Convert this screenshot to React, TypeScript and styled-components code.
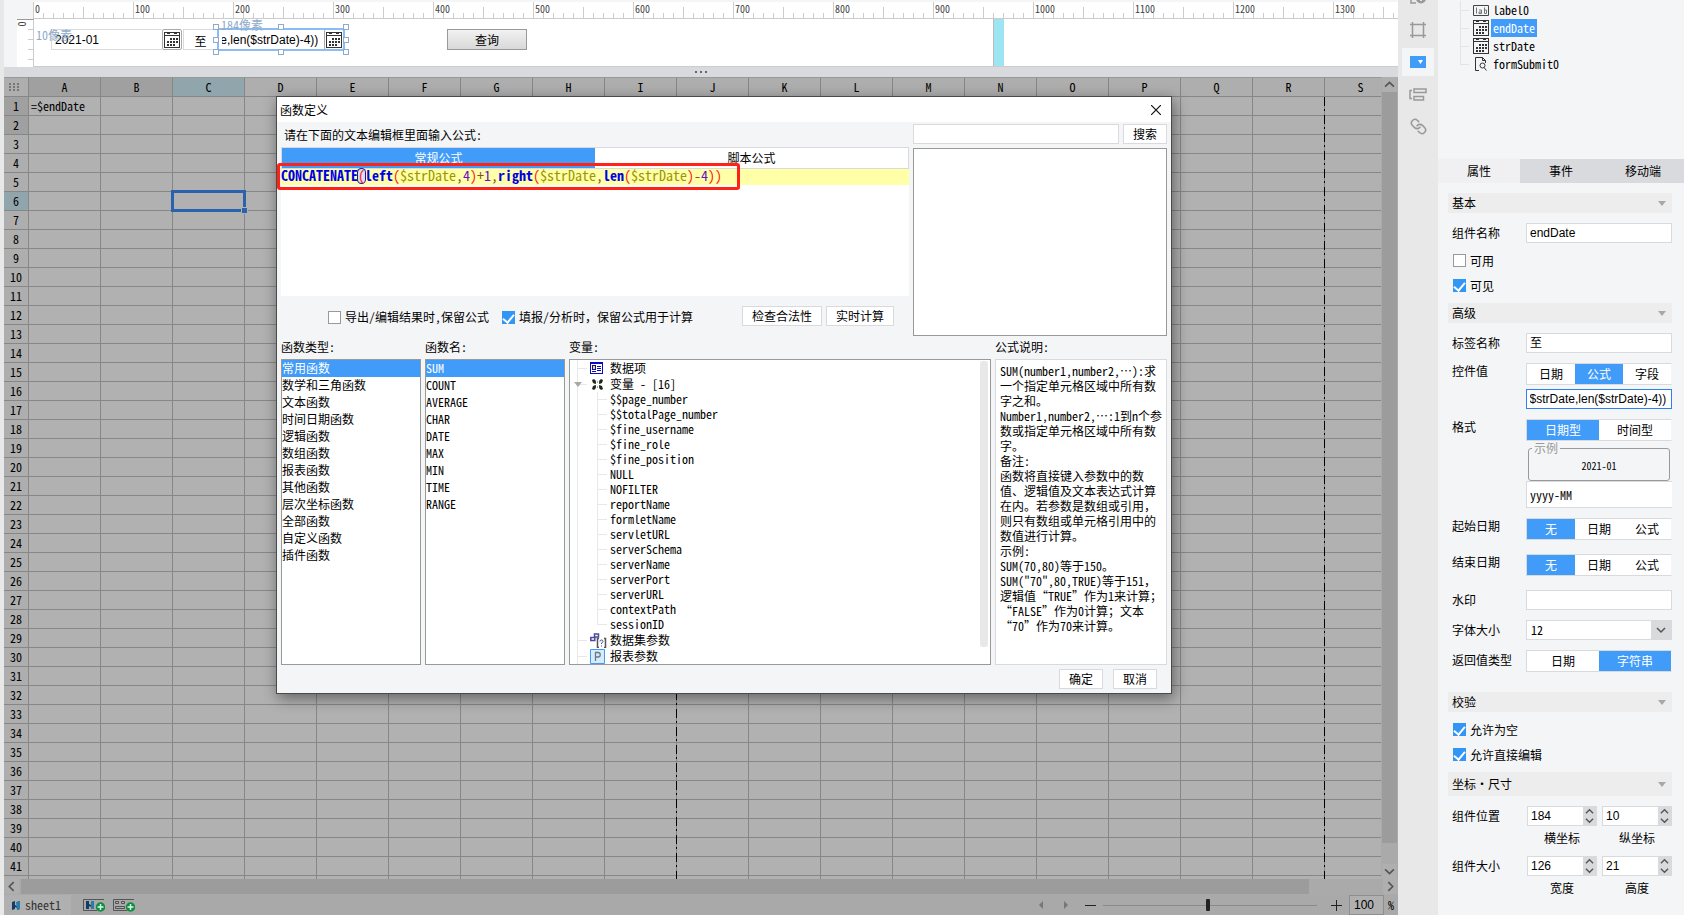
import React from "react";
import styled, { createGlobalStyle, css } from "styled-components";

const sans = `"Liberation Sans", Arial, "Noto Sans CJK SC", sans-serif`;
const song = `"Noto Sans Mono CJK SC", "Noto Sans CJK SC", monospace`;
const blue = "#419bf9";
const panelBg = "#f4f5f7";
const line = "#d9dadd";

const GlobalStyle = createGlobalStyle`
  * { box-sizing: border-box; }
  body { margin: 0; background: #e8e8e8; color: #000; font: 12px/16px ${song}; overflow: hidden; }
  button, input, select { font: inherit; color: inherit; border-radius: 0; margin: 0; }
  button { cursor: pointer; padding: 0; }
  ul { list-style: none; margin: 0; padding: 0; }
  svg { display: block; flex: none; }
`;

/* ---------- page frame ---------- */

const Page = styled.div`
  position: relative;
  display: flex;
  height: 100vh;
  padding-left: 4px;
`;

const Workspace = styled.main`
  flex: 1;
  min-width: 0;
  display: flex;
  flex-direction: column;
`;

/* ---------- form designer strip ---------- */

const Designer = styled.section`
  display: grid;
  grid-template-columns: 30px 1fr;
  grid-template-rows: 19px 48px;
  height: 67px;
  background: ${panelBg};
`;

const HRuler = styled.div`
  grid-column: 2;
  display: flex;
  min-width: 0;
  overflow: hidden;
  margin-top: 2px;
  margin-left: -1px;
  background: #fff;
  border-bottom: 1px solid #ccc;
`;

const RulerSegment = styled.div`
  flex: none;
  width: 100px;
  padding-left: 2px;
  font: 10px/14px ${song};
  color: #444;
  background:
    linear-gradient(#ccc, #ccc) 0 0 / 1px 100% no-repeat,
    linear-gradient(#ccc, #ccc) 50px 100% / 1px 11px no-repeat,
    repeating-linear-gradient(90deg, #ccc 0 1px, transparent 1px 10px) 0 100% / 100% 5px no-repeat;

  &:last-child { flex: 1; width: auto; }
`;

const VRuler = styled.div`
  grid-row: 2;
  margin-left: 13px;
  border-top: 1px solid #999;
  border-right: 1px solid #ccc;
  color: #444;
  font: 10px/8px ${song};
  background:
    repeating-linear-gradient(#ccc 0 1px, transparent 1px 10px) 100% 9px / 5px 100% no-repeat,
    #fff;

  span { display: block; width: 10px; text-align: center; transform: rotate(-90deg); }
`;

const CanvasRow = styled.div`
  display: flex;
  background: #fff;
  overflow: hidden;
  border-bottom: 1px solid #ccc;
`;

const FormCanvas = styled.div`
  position: relative;
  flex: none;
  width: 960px;
  border-right: 1px solid #bbb;
`;

const CanvasHandle = styled.div`
  width: 10px;
  background: #9ee5f3;
`;

const Widget = styled.div<{ x: number; w: number }>`
  position: absolute;
  top: 10px;
  left: ${(p) => p.x}px;
  width: ${(p) => p.w}px;
  height: 21px;
  display: flex;
`;

const WidgetInput = styled.input`
  flex: 1;
  min-width: 0;
  padding: 0 6px 0 3px;
  border: 1px solid ${line};
  border-right: 0;
  font-family: ${sans};
  outline: none;
`;

const WidgetLabel = styled.span`
  flex: 1;
  border: 1px solid ${line};
  text-align: center;
  line-height: 21px;
`;

const CalendarButton = styled.button`
  width: 20px;
  display: grid;
  place-items: center;
  background: #fff;
  border: 1px solid #aaa;
  border-radius: 2px;
`;

const QueryButton = styled.button`
  flex: 1;
  border: 1px solid #999;
  background: linear-gradient(#f2f2f2, #d8d8d8);
`;

const Selection = styled.div`
  position: absolute;
  inset: -1px;
  border: 2px solid #8cbcf5;
  pointer-events: none;
`;

const Grip = styled.i<{ x: number; y: number }>`
  position: absolute;
  left: ${(p) => p.x}%;
  top: ${(p) => p.y}%;
  width: 6px;
  height: 6px;
  margin: ${(p) => (p.y - 50) / 25 - 3}px 0 0 ${(p) => (p.x - 50) / 25 - 3}px;
  background: #fff;
  border: 1px solid #8fabc9;
`;

const Measure = styled.span<{ x: number; y: number }>`
  position: absolute;
  left: ${(p) => p.x}px;
  top: ${(p) => p.y}px;
  line-height: 12px;
  color: #8fabc9;
`;

const Splitter = styled.div`
  display: flex;
  justify-content: center;
  align-items: center;
  gap: 3px;
  height: 10px;
  background: ${line};

  i { width: 2px; height: 2px; background: #666; }
`;

/* ---------- spreadsheet ---------- */

const SheetArea = styled.section`
  flex: 1;
  min-height: 0;
  display: flex;
  background: #aaa;
`;

const GridViewport = styled.div`
  position: relative;
  flex: 1;
  min-width: 0;
  overflow: hidden;
  background: #b1b1b1;
`;

const Sheet = styled.table`
  table-layout: fixed;
  width: 1393px;
  border-collapse: separate;
  border-spacing: 0;

  th, td {
    height: 19px;
    padding: 0;
    font-weight: 400;
    line-height: 16px;
    border-right: 1px solid #878787;
    border-bottom: 1px solid #878787;
    white-space: nowrap;
  }
  thead th { height: 20px; border-top: 1px solid #999; }
  td { padding-left: 2px; }
`;

const HeadCell = styled.th<{ tone?: "active" | "used" }>`
  background: ${(p) => (p.tone === "active" ? "#90a6ac" : p.tone === "used" ? "#a0a0a0" : "#aeaeae")};
`;

const SelectedCell = styled.td`
  position: relative;

  &::before {
    content: "";
    position: absolute;
    inset: -2px;
    border: 3px solid #2a62ad;
  }
  &::after {
    content: "";
    position: absolute;
    right: -3px;
    bottom: -3px;
    width: 5px;
    height: 5px;
    background: #2a62ad;
    outline: 1px solid #b1b1b1;
  }
`;

const PageBreak = styled.div<{ column: number }>`
  position: absolute;
  top: 20px;
  bottom: 0;
  left: ${(p) => 24 + p.column * 72}px;
  width: 1px;
  background: repeating-linear-gradient(#000 0 9px, transparent 9px 12px, #000 12px 14px, transparent 14px 18px);
`;

const VScroll = styled.div`
  width: 17px;
  padding: 0 1px;
  display: flex;
  flex-direction: column;
  background: #aaa;
`;

const ScrollButton = styled.button`
  flex: none;
  width: 15px;
  height: 15px;
  display: grid;
  place-items: center;
  border: 0;
  color: #555;
  background: #afafaf;
`;

const VThumb = styled.div`
  flex: 1;
  margin-bottom: 21px;
  background: #9c9c9c;
`;

const HScroll = styled.div`
  display: flex;
  height: 16px;
  background: #aaa;
`;

const HThumb = styled.div`
  flex: 1;
  margin: 0 74px 1px 2px;
  background: #9c9c9c;
`;

const StatusBar = styled.footer`
  display: flex;
  align-items: center;
  height: 20px;
  background: #a9a9a9;
`;

const SheetTab = styled.button`
  display: flex;
  align-items: center;
  gap: 5px;
  width: 67px;
  height: 20px;
  padding-left: 8px;
  margin-right: 12px;
  border: 0;
  color: #333;
  background: #b0b0b0;
`;

const BarButton = styled.button<{ gap?: number }>`
  border: 0;
  background: none;
  margin-right: ${(p) => p.gap ?? 0}px;
`;

const Spacer = styled.div`
  flex: 1;
`;

const ZoomSlider = styled.input`
  appearance: none;
  width: 214px;
  height: 14px;
  margin-right: 14px;
  background: linear-gradient(#8a8a8a, #8a8a8a) 0 50% / 100% 1px no-repeat;

  &::-webkit-slider-thumb {
    appearance: none;
    width: 4px;
    height: 12px;
    border-radius: 1px;
    background: #222;
  }
`;

const ZoomInput = styled.input`
  width: 35px;
  height: 20px;
  padding: 0 0 0 4px;
  font-family: ${sans};
  border: 1px solid #8e8e8e;
  background: #b0b0b0;
`;

const Percent = styled.span`
  width: 14px;
  text-align: center;
`;

/* ---------- tool strip ---------- */

const ToolStrip = styled.nav`
  flex: none;
  width: 40px;
  padding-left: 4px;
  display: flex;
  flex-direction: column;
  gap: 4px;
  background: #e8e8e8;
  overflow: hidden;
`;

const ToolButton = styled.button<{ on?: boolean; cut?: boolean }>`
  flex: none;
  width: 32px;
  height: 28px;
  margin-top: ${(p) => (p.cut ? -16 : 0)}px;
  display: grid;
  place-items: center;
  border: 0;
  background: ${(p) => (p.on ? panelBg : "transparent")};
`;

/* ---------- property panel ---------- */

const Panel = styled.aside`
  flex: none;
  width: 246px;
  background: ${panelBg};
`;

const WidgetTree = styled.ul`
  height: 159px;
  padding: 1px 0 0 22px;
`;

const WidgetNode = styled.li<{ on?: boolean }>`
  display: flex;
  align-items: center;
  height: 18px;
  padding-left: 13px;
  gap: 2px;
  background:
    linear-gradient(#e4e4e6, #e4e4e6) 0 0 / 1px 100% no-repeat,
    linear-gradient(#e4e4e6, #e4e4e6) 0 50% / 9px 1px no-repeat;

  &:last-child {
    background:
      linear-gradient(#e4e4e6, #e4e4e6) 0 0 / 1px 50% no-repeat,
      linear-gradient(#e4e4e6, #e4e4e6) 0 50% / 9px 1px no-repeat;
  }
  span {
    line-height: 18px;
    padding: 0 2px;
    color: ${(p) => (p.on ? "#fff" : "#000")};
    background: ${(p) => (p.on ? blue : "transparent")};
  }
`;

const TabBar = styled.div`
  display: grid;
  grid-template-columns: repeat(3, 1fr);
  height: 24px;
`;

const PanelTab = styled.button<{ on?: boolean }>`
  border: 0;
  background: ${(p) => (p.on ? "#f0f0f2" : "#d9dadd")};
`;

const PanelBody = styled.div`
  padding: 10px 12px 0 10px;
`;

const SectionHead = styled.button<{ tall?: boolean; top?: number }>`
  display: flex;
  align-items: center;
  justify-content: space-between;
  width: 100%;
  height: ${(p) => (p.tall ? 24 : 20)}px;
  margin-top: ${(p) => p.top ?? 0}px;
  padding: 0 6px 0 4px;
  border: 0;
  background: #ededed;
`;

const Field = styled.div<{ top?: number; lift?: boolean }>`
  display: grid;
  grid-template-columns: 74px minmax(0, 1fr);
  margin-top: ${(p) => p.top ?? 10}px;
  padding-left: 4px;
  line-height: ${(p) => (p.lift ? 16 : 20)}px;
`;

const Stack = styled.div<{ gap: number }>`
  display: grid;
  gap: ${(p) => p.gap}px;
`;

const TextInput = styled.input<{ focused?: boolean }>`
  width: 100%;
  min-width: 0;
  height: 20px;
  padding: 0 5px 0 3px;
  font-family: ${sans};
  background: #fff;
  border: 1px solid ${(p) => (p.focused ? "#2c80f0" : line)};
  outline: none;
`;

const PatternInput = styled(TextInput)`
  height: 27px;
  border-right: 0;
  font-family: ${song};
`;

const Segments = styled.div`
  display: flex;
  height: 22px;
  border: 1px solid ${line};
  border-right-color: transparent;
`;

const Segment = styled.button<{ on?: boolean }>`
  flex: 1;
  border: 0;
  color: ${(p) => (p.on ? "#fff" : "#000")};
  background: ${(p) => (p.on ? blue : "#fff")};
`;

const Sample = styled.fieldset`
  height: 40px;
  margin: 0 2px;
  padding: 0;
  font-size: 10px;
  line-height: 22px;
  border: 1px solid #999;
  border-radius: 3px;

  legend { padding: 0 2px; margin-left: 3px; font-size: 12px; line-height: 14px; color: #999; }
  output { display: block; text-align: center; }
`;

const Check = styled.label<{ top?: number }>`
  display: flex;
  align-items: center;
  gap: 4px;
  height: 15px;
  margin-top: ${(p) => p.top ?? 10}px;
  margin-left: 5px;

  input {
    appearance: none;
    display: grid;
    place-items: center;
    width: 13px;
    height: 13px;
    background: #fff;
    border: 1px solid #999;
  }
  input:checked { background: #3296f5; border-color: #3296f5; }
  input:checked::after {
    content: "";
    width: 5px;
    height: 9px;
    margin-bottom: 2px;
    border: solid #fff;
    border-width: 0 2px 2px 0;
    transform: rotate(40deg);
  }
`;

const SelectBox = styled.div`
  display: grid;
  grid-template-columns: 1fr 20px;
  height: 20px;
  border: 1px solid ${line};
  background: linear-gradient(${line}, ${line}) 100% 0 / 20px 100% no-repeat, #fff;

  select {
    grid-area: 1 / 1 / 2 / 3;
    appearance: none;
    padding: 0 4px;
    line-height: 16px;
    border: 0;
    background: none;
  }
  svg { grid-area: 1 / 2; place-self: center; pointer-events: none; }
`;

const Pair = styled.div`
  display: grid;
  grid-template-columns: repeat(2, minmax(0, 1fr));
  gap: 5px;
  padding-left: 1px;
`;

const SpinCell = styled.label`
  display: grid;
  grid-template-columns: minmax(0, 1fr);
  grid-template-rows: 20px 24px;
  line-height: 24px;
  text-align: center;
`;

const SpinBox = styled.span`
  display: flex;
  border: 1px solid ${line};
  background: #fff;

  input { flex: 1; min-width: 0; padding: 0 3px; border: 0; font-family: ${sans}; background: none; }
`;

const SpinButtons = styled.span`
  display: grid;
  grid-template-rows: 9px 9px;
  width: 13px;
  background: ${line};

  button { display: grid; place-items: center; border: 0; background: none; }
`;

/* ---------- formula dialog ---------- */

const Dialog = styled.section`
  position: absolute;
  left: 276px;
  top: 96px;
  width: 896px;
  border: 1px solid #4a4a4a;
  background: ${panelBg};
  box-shadow: 2px 4px 14px rgba(0, 0, 0, 0.45);
`;

const TitleBar = styled.header`
  display: flex;
  align-items: center;
  justify-content: space-between;
  height: 25px;
  padding: 0 10px 0 3px;
  background: #fff;

  button { border: 0; background: none; }
`;

const DialogBody = styled.div`
  padding: 0 4px;
`;

const Upper = styled.div`
  display: grid;
  grid-template-columns: 1fr 254px;
  gap: 4px;
  height: 216px;
`;

const Prompt = styled.div`
  padding-left: 3px;
  line-height: 26px;
  height: 25px;
`;

const EditorTabs = styled.div`
  display: flex;
  height: 22px;
  border: 1px solid ${line};
`;

const EditorFrame = styled.div`
  position: relative;
`;

const Editor = styled.div`
  height: 127px;
  background: #fff;
  outline: none;
`;

const CodeLine = styled.div`
  height: 16px;
  font: 14px/12px ${song};
  white-space: pre;
  background: #ffffa7;
`;

const tokenColors = {
  fn: "#0000e6",
  paren: "#ff1a1a",
  match: "#ff1a1a",
  variable: "#999600",
  op: "#8a4a30",
  num: "#6a10c8",
};

const Token = styled.span<{ kind: keyof typeof tokenColors }>`
  color: ${(p) => tokenColors[p.kind]};
  font-weight: ${(p) => (p.kind === "fn" ? 700 : 400)};
  ${(p) =>
    p.kind === "match" &&
    css`
      display: inline-block;
      height: 14px;
      background: #dcdcf4;
      border-radius: 4px;
      box-shadow: 0 0 0 1px #1c1c80;
    `}
`;

const Highlight = styled.div`
  position: absolute;
  left: -4px;
  top: -6px;
  width: 463px;
  height: 27px;
  border: 3px solid #ff2216;
  border-radius: 3px;
  pointer-events: none;
`;

const Options = styled.div`
  display: flex;
  align-items: center;
  height: 42px;
  padding: 0 15px 0 42px;

  label { margin-top: 0; margin-right: 8px; }
`;

const PushButton = styled.button<{ w: number }>`
  flex: none;
  width: ${(p) => p.w}px;
  height: 20px;
  background: #fff;
  border: 1px solid ${line};
`;

const SearchRow = styled.div`
  display: flex;
  gap: 4px;
  margin: 2px 0 4px;
`;

const Framed = styled.div`
  height: 188px;
  background: #fff;
  border: 1px solid #999;
`;

const Lower = styled.div`
  display: grid;
  grid-template-columns: 140px 140px 1fr 172px;
  gap: 0 4px;
`;

const Caption = styled.h2`
  margin: 0;
  height: 21px;
  font-size: 12px;
  font-weight: 400;
  line-height: 18px;
`;

const List = styled.ul`
  height: 306px;
  overflow: hidden;
  background: #fff;
  border: 1px solid #999;
`;

const ListItem = styled.li<{ on?: boolean }>`
  height: 17px;
  line-height: 15px;
  color: ${(p) => (p.on ? "#fff" : "#000")};
  background: ${(p) => (p.on ? blue : "transparent")};
`;

const TreeFrame = styled.div`
  display: flex;
  height: 306px;
  background: #fff;
  border: 1px solid #999;
`;

const Tree = styled.ul`
  flex: 1;
  margin-left: 7px;
  border-left: 1px solid #e8e8e8;
`;

const Branch = styled.li`
  display: flex;
  align-items: center;
  height: 16px;
  background: linear-gradient(#e8e8e8, #e8e8e8) 0 50% / 9px 1px no-repeat;
`;

const BranchIcon = styled.span<{ open?: boolean }>`
  display: flex;
  align-items: center;
  gap: 10px;
  width: 32px;
  padding-left: ${(p) => (p.open ? 0 : 12)}px;
  margin-left: ${(p) => (p.open ? -4 : 0)}px;
  margin-right: ${(p) => (p.open ? 4 : 0)}px;
`;

const Leaves = styled.ul`
  margin-left: 19px;
  background: linear-gradient(#e8e8e8, #e8e8e8) 0 0 / 1px 233px no-repeat;
`;

const Leaf = styled.li`
  height: 15px;
  padding-left: 13px;
  line-height: 13px;
  background: linear-gradient(#e8e8e8, #e8e8e8) 0 50% / 10px 1px no-repeat;
`;

const TreeScroll = styled.div`
  width: 8px;
  height: 286px;
  margin: 1px 2px 0 0;
  border-radius: 3px;
  background: #e8e8e8;
`;

const Description = styled.div`
  height: 306px;
  padding: 3px 0 0 4px;
  line-height: 15px;
  white-space: pre;
  background: #fff;
  border: 1px solid ${line};
`;

const DialogFooter = styled.footer`
  display: flex;
  justify-content: flex-end;
  gap: 10px;
  padding: 4px 10px 4px 0;
`;

/* ---------- icons ---------- */

const Chevron = ({ dir, size = 9, color = "#555" }: { dir: "up" | "down" | "left" | "right"; size?: number; color?: string }) => {
  const d = {
    up: "M1 7 5 3l4 4",
    down: "M1 3l4 4 4-4",
    left: "M7 1 3 5l4 4",
    right: "M3 1l4 4-4 4",
  }[dir];
  return (
    <svg width={size} height={size} viewBox="0 0 10 10" fill="none" stroke={color} strokeWidth="1.5">
      <path d={d} />
    </svg>
  );
};

const Caret = () => (
  <svg width="8" height="5" viewBox="0 0 8 5">
    <path d="M0 0h8L4 5z" fill="#a8a8a8" />
  </svg>
);

const CalendarIcon = () => (
  <svg width="16" height="16" viewBox="0 0 16 16" shapeRendering="crispEdges">
    <path d="M.5.5h15v15H.5zM1 3.500h14" fill="none" stroke="#333" />
    <path d="M3 1h3v1H3zM10 1h3v1h-3z" fill="#333" />
    <path d="M6 6h2v2H6zM9 6h2v2H9zM12 6h2v2h-2zM3 9h2v2H3zM6 9h2v2H6zM9 9h2v2H9zM12 9h2v2h-2zM3 12h2v2H3zM6 12h2v2H6zM9 12h2v2H9z" fill="#333" />
  </svg>
);

const LabelIcon = () => (
  <svg width="16" height="11" viewBox="0 0 16 11" fill="none" stroke="#444">
    <path d="M.5.5h15v10H.5z" />
    <path d="M3.500 2.500v6M6 5h2.500v3.500H6V7h2.500M11.500 2.500v6h2V5h-2" stroke="#777" />
  </svg>
);

const SubmitIcon = () => (
  <svg width="16" height="14" viewBox="0 0 16 14" fill="none" stroke="#333">
    <path d="M6 13.500H2.500V.5h7l3 3V6M9.500.5v3h3" />
    <circle cx="9.500" cy="8.500" r="2.500" />
    <path d="M11 10.500l2.500 3" />
  </svg>
);

const DataItemIcon = () => (
  <svg width="13" height="12" viewBox="0 0 13 12" shapeRendering="crispEdges">
    <path d="M0 0h13v12H0z" fill="#0a0ac0" />
    <path d="M1 2h11v9H1z" fill="#fff" />
    <path d="M2 3h4v5H2z" fill="#0a0ac0" />
    <path d="M3 4h2v3H3z" fill="#ffe800" />
    <path d="M7 4h4v1H7zM7 6h4v1H7zM7 8h4v1H7zM2 9h4v1H2z" fill="#0a0ac0" />
  </svg>
);

const VariableIcon = () => (
  <svg width="11" height="11" viewBox="0 0 11 11" fill="#222">
    <path d="M0 1l2-1 2 2v3L1 4zM11 1L9 0 7 2v3l3-1zM0 10l1-3 3-1v3l-2 2zM11 10l-1-3-3-1v3l2 2z" />
    <path d="M3 3h5v5H3z" fill="none" stroke="#3a6a3a" strokeDasharray="1 1" />
  </svg>
);

const DatasetIcon = () => (
  <svg width="17" height="15" viewBox="0 0 17 15" fill="none" stroke="#4a4aa0">
    <path d="M4.500 1h4v3h-4zM.8 4.500h4v3h-4z" strokeWidth="1.500" />
    <path d="M9 5.500H7.500v9H9M14 5.500h1.500v9H14" stroke="#555" strokeWidth="1.500" />
    <path d="M10 8.500q0-1.500 1.500-1.500T13 8.500q0 1-1.500 1.500v1M11.500 12.500v1" />
  </svg>
);

const ParamIcon = () => (
  <svg width="15" height="15" viewBox="0 0 15 15">
    <path d="M.5.5h14v14H.5z" fill="#d7ebfa" stroke={blue} />
    <path d="M5.500 12V3.500H8a2.200 2.200 0 010 4.500H5.500" fill="none" stroke="#6a7a88" strokeWidth="1.300" />
  </svg>
);

const SheetIcon = () => (
  <svg width="8" height="9" viewBox="0 0 8 9">
    <path d="M0 1l3-1v4l2 1V1l3-1v8L5 9V7L3 6v2L0 9z" fill="#123c66" />
    <path d="M4 1l4-1v8L5 9z" fill="#2a7da8" />
  </svg>
);

const AddSheetIcon = ({ form }: { form?: boolean }) => (
  <svg width="22" height="13" viewBox="0 0 22 13">
    <path d="M21 .5H.5v11H14" fill="none" stroke="#555" />
    {form ? (
      <path d="M2.500 2.500h3v2h-3zM8.500 2.500h3v2h-3zM2.500 7.500h9v2h-9z" fill="none" stroke="#555" />
    ) : (
      <g>
        <path d="M3 2h3v3l2 1V2h3v8H8V8L6 7v3H3z" fill="#123c66" />
        <path d="M8 2h3v8H8z" fill="#2a7da8" />
      </g>
    )}
    <circle cx="17.500" cy="8" r="4.700" fill="#148a3c" />
    <path d="M17.500 5v6M14.500 8h6" stroke="#cfe" strokeWidth="1.500" />
  </svg>
);

const InfoTool = () => (
  <svg width="16" height="14" viewBox="0 0 16 14" fill="none" stroke="#999" strokeWidth="1.500">
    <path d="M6 1H1v11h5M1 7h4" />
    <circle cx="11" cy="7.500" r="5" fill="#999" stroke="none" />
    <path d="M11 5v5" stroke="#fff" />
  </svg>
);

const FrameTool = () => (
  <svg width="16" height="16" viewBox="0 0 16 16" fill="none" stroke="#999" strokeWidth="1.500">
    <path d="M2.500 0v16M13.500 0v16M0 2.500h16M0 13.500h16" />
  </svg>
);

const WidgetTool = () => (
  <svg width="16" height="12" viewBox="0 0 16 12">
    <path d="M0 0h16v12H0z" fill={blue} />
    <path d="M8 4h5l-2.500 4z" fill="#fff" />
  </svg>
);

const TreeTool = () => (
  <svg width="18" height="13" viewBox="0 0 18 13" fill="none" stroke="#999" strokeWidth="1.500">
    <path d="M5 1h12v3.500H5zM5 8.500h9.500V12H5zM3 2.500H1v8h2" />
  </svg>
);

const LinkTool = () => (
  <svg width="17" height="17" viewBox="0 0 24 24" fill="none" stroke="#999" strokeWidth="2.200" strokeLinecap="round">
    <g transform="matrix(-1 0 0 1 24 0)">
      <path d="M10 13a5 5 0 0 0 7.540.540l3-3a5 5 0 0 0-7.070-7.070l-1.720 1.710" />
      <path d="M14 11a5 5 0 0 0-7.540-.540l-3 3a5 5 0 0 0 7.070 7.070l1.710-1.710" />
    </g>
  </svg>
);

/* ---------- data ---------- */

const columns = "ABCDEFGHIJKLMNOPQRS".split("");
const rows = Array.from({ length: 42 }, (_, i) => i + 1);
const rulerMarks = Array.from({ length: 14 }, (_, i) => i * 100);
const formula = "CONCATENATE(left($strDate,4)+1,right($strDate,len($strDate)-4))";

const tokens: [keyof typeof tokenColors, string][] = [
  ["fn", "CONCATENATE"], ["match", "("], ["fn", "left"], ["paren", "("], ["variable", "$strDate"],
  ["op", ","], ["num", "4"], ["paren", ")"], ["op", "+"], ["num", "1"], ["op", ","], ["fn", "right"],
  ["paren", "("], ["variable", "$strDate"], ["op", ","], ["fn", "len"], ["paren", "("],
  ["variable", "$strDate"], ["paren", ")"], ["op", "-"], ["num", "4"], ["paren", "))"],
];

const categories = [
  "常用函数", "数学和三角函数", "文本函数", "时间日期函数", "逻辑函数", "数组函数",
  "报表函数", "其他函数", "层次坐标函数", "全部函数", "自定义函数", "插件函数",
];
const functions = ["SUM", "COUNT", "AVERAGE", "CHAR", "DATE", "MAX", "MIN", "TIME", "RANGE"];
const variables = [
  "$$page_number", "$$totalPage_number", "$fine_username", "$fine_role", "$fine_position",
  "NULL", "NOFILTER", "reportName", "formletName", "servletURL", "serverSchema",
  "serverName", "serverPort", "serverURL", "contextPath", "sessionID",
];
const description = [
  "SUM(number1,number2,…):求",
  "一个指定单元格区域中所有数",
  "字之和。",
  "Number1,number2,…:1到n个参",
  "数或指定单元格区域中所有数",
  "字。",
  "备注:",
  "函数将直接键入参数中的数",
  "值、逻辑值及文本表达式计算",
  "在内。若参数是数组或引用，",
  "则只有数组或单元格引用中的",
  "数值进行计算。",
  "示例:",
  "SUM(70,80)等于150。",
  "SUM(\"70\",80,TRUE)等于151，",
  "逻辑值“TRUE”作为1来计算；",
  "“FALSE”作为0计算；文本",
  "“70”作为70来计算。",
].join("\n");

const scrollToEnd = (el: HTMLInputElement | null) => {
  if (el) el.scrollLeft = el.scrollWidth;
};

/* ---------- composed parts ---------- */

const SegmentGroup = ({ label, items, active }: { label: string; items: string[]; active: string }) => (
  <Segments role="group" aria-label={label}>
    {items.map((t) => (
      <Segment key={t} type="button" on={t === active} aria-pressed={t === active}>{t}</Segment>
    ))}
  </Segments>
);

const Spinner = ({ value, caption }: { value: string; caption: string }) => (
  <SpinCell>
    <SpinBox>
      <input defaultValue={value} inputMode="numeric" />
      <SpinButtons>
        <button type="button" aria-label="+"><Chevron dir="up" /></button>
        <button type="button" aria-label="-"><Chevron dir="down" /></button>
      </SpinButtons>
    </SpinBox>
    {caption}
  </SpinCell>
);

const Section = ({ title, top, tall }: { title: string; top?: number; tall?: boolean }) => (
  <SectionHead type="button" top={top} tall={tall}>{title}<Caret /></SectionHead>
);

const FormDesigner = () => (
  <Designer>
    <HRuler>
      {rulerMarks.map((n) => <RulerSegment key={n}>{n}</RulerSegment>)}
    </HRuler>
    <VRuler><span>0</span></VRuler>
    <CanvasRow>
      <FormCanvas>
        <Widget x={17} w={131}>
          <WidgetInput aria-label="strDate" defaultValue="2021-01" />
          <CalendarButton type="button" aria-label="strDate"><CalendarIcon /></CalendarButton>
        </Widget>
        <Widget x={149} w={35}><WidgetLabel>至</WidgetLabel></Widget>
        <Widget x={184} w={126}>
          <WidgetInput aria-label="endDate" readOnly value={formula} ref={scrollToEnd} />
          <CalendarButton type="button" aria-label="endDate"><CalendarIcon /></CalendarButton>
          <Selection />
          {[0, 50, 100].flatMap((y) =>
            [0, 50, 100].filter((x) => !(x === 50 && y === 50)).map((x) => <Grip key={`${x}-${y}`} x={x} y={y} />)
          )}
        </Widget>
        <Widget x={413} w={80}><QueryButton type="button">查询</QueryButton></Widget>
        <Measure x={187} y={0}>184像素</Measure>
        <Measure x={2} y={10}>10像素</Measure>
      </FormCanvas>
      <CanvasHandle />
    </CanvasRow>
  </Designer>
);

const Spreadsheet = () => (
  <SheetArea>
    <GridViewport>
      <Sheet>
        <colgroup>
          <col style={{ width: 25 }} />
          {columns.map((c) => <col key={c} />)}
        </colgroup>
        <thead>
          <tr>
            <HeadCell>
              <svg width="24" height="10" viewBox="0 0 24 10" fill="#777">
                {[5, 9, 13].map((x) => [1, 4, 7].map((y) => <rect key={`${x}-${y}`} x={x} y={y} width="2" height="2" />))}
              </svg>
            </HeadCell>
            {columns.map((c) => (
              <HeadCell key={c} scope="col" tone={c === "C" ? "active" : c === "A" || c === "B" ? "used" : undefined}>{c}</HeadCell>
            ))}
          </tr>
        </thead>
        <tbody>
          {rows.map((r) => (
            <tr key={r}>
              <HeadCell scope="row" tone={r === 6 ? "active" : r < 3 ? "used" : undefined}>{r < 42 ? r : ""}</HeadCell>
              {columns.map((c) =>
                r === 6 && c === "C" ? <SelectedCell key={c} /> : <td key={c}>{r === 1 && c === "A" ? "=$endDate" : null}</td>
              )}
            </tr>
          ))}
        </tbody>
      </Sheet>
      <PageBreak column={9} />
      <PageBreak column={18} />
    </GridViewport>
    <VScroll>
      <ScrollButton type="button" aria-label="up"><Chevron dir="up" size={11} /></ScrollButton>
      <VThumb />
      <ScrollButton type="button" aria-label="down"><Chevron dir="down" size={11} /></ScrollButton>
    </VScroll>
  </SheetArea>
);

const BottomBars = () => (
  <>
    <HScroll>
      <ScrollButton type="button" aria-label="left"><Chevron dir="left" size={11} /></ScrollButton>
      <HThumb />
      <ScrollButton type="button" aria-label="right"><Chevron dir="right" size={11} /></ScrollButton>
    </HScroll>
    <StatusBar>
      <SheetTab type="button"><SheetIcon />sheet1</SheetTab>
      <BarButton type="button" aria-label="add sheet" gap={8}><AddSheetIcon /></BarButton>
      <BarButton type="button" aria-label="add form"><AddSheetIcon form /></BarButton>
      <Spacer />
      <BarButton type="button" aria-label="previous" gap={21}>
        <svg width="4" height="8" viewBox="0 0 4 8"><path d="M4 0v8L0 4z" fill="#777" /></svg>
      </BarButton>
      <BarButton type="button" aria-label="next" gap={17}>
        <svg width="4" height="8" viewBox="0 0 4 8"><path d="M0 0v8l4-4z" fill="#777" /></svg>
      </BarButton>
      <BarButton type="button" aria-label="zoom out" gap={7}>
        <svg width="11" height="11" viewBox="0 0 11 11"><path d="M0 5.500h11" stroke="#222" /></svg>
      </BarButton>
      <ZoomSlider type="range" aria-label="zoom" min="0" max="100" defaultValue="49" />
      <BarButton type="button" aria-label="zoom in" gap={7}>
        <svg width="11" height="11" viewBox="0 0 11 11"><path d="M0 5.500h11M5.500 0v11" stroke="#222" /></svg>
      </BarButton>
      <ZoomInput aria-label="zoom value" defaultValue="100" />
      <Percent>%</Percent>
    </StatusBar>
  </>
);

const Tools = () => (
  <ToolStrip>
    <ToolButton type="button" cut aria-label="cell element"><InfoTool /></ToolButton>
    <ToolButton type="button" aria-label="floating element"><FrameTool /></ToolButton>
    <ToolButton type="button" on aria-label="widget settings"><WidgetTool /></ToolButton>
    <ToolButton type="button" aria-label="conditions"><TreeTool /></ToolButton>
    <ToolButton type="button" aria-label="hyperlink"><LinkTool /></ToolButton>
  </ToolStrip>
);

const Properties = () => (
  <Panel>
    <WidgetTree>
      <WidgetNode><LabelIcon /><span>label0</span></WidgetNode>
      <WidgetNode on><CalendarIcon /><span>endDate</span></WidgetNode>
      <WidgetNode><CalendarIcon /><span>strDate</span></WidgetNode>
      <WidgetNode><SubmitIcon /><span>formSubmit0</span></WidgetNode>
    </WidgetTree>
    <TabBar role="tablist">
      <PanelTab type="button" role="tab" on aria-selected>属性</PanelTab>
      <PanelTab type="button" role="tab">事件</PanelTab>
      <PanelTab type="button" role="tab">移动端</PanelTab>
    </TabBar>
    <PanelBody>
      <Section title="基本" />
      <Field>
        <label htmlFor="widget-name">组件名称</label>
        <TextInput id="widget-name" defaultValue="endDate" />
      </Field>
      <Check><input type="checkbox" />可用</Check>
      <Check><input type="checkbox" defaultChecked />可见</Check>
      <Section title="高级" top={10} />
      <Field>
        <label htmlFor="label-name">标签名称</label>
        <TextInput id="label-name" defaultValue="至" />
      </Field>
      <Field lift>
        <label htmlFor="widget-value">控件值</label>
        <Stack gap={4}>
          <SegmentGroup label="控件值" items={["日期", "公式", "字段"]} active="公式" />
          <TextInput id="widget-value" focused readOnly value={formula} ref={scrollToEnd} />
        </Stack>
      </Field>
      <Field lift>
        <label htmlFor="format">格式</label>
        <Stack gap={0}>
          <SegmentGroup label="格式" items={["日期型", "时间型"]} active="日期型" />
          <Sample><legend>示例</legend><output>2021-01</output></Sample>
          <PatternInput id="format" defaultValue="yyyy-MM" />
        </Stack>
      </Field>
      <Field lift>
        <span>起始日期</span>
        <SegmentGroup label="起始日期" items={["无", "日期", "公式"]} active="无" />
      </Field>
      <Field lift top={14}>
        <span>结束日期</span>
        <SegmentGroup label="结束日期" items={["无", "日期", "公式"]} active="无" />
      </Field>
      <Field top={14}>
        <label htmlFor="watermark">水印</label>
        <TextInput id="watermark" />
      </Field>
      <Field>
        <label htmlFor="font-size">字体大小</label>
        <SelectBox>
          <select id="font-size" defaultValue="12"><option>12</option><option>14</option></select>
          <Chevron dir="down" size={10} />
        </SelectBox>
      </Field>
      <Field>
        <span>返回值类型</span>
        <SegmentGroup label="返回值类型" items={["日期", "字符串"]} active="字符串" />
      </Field>
      <Section title="校验" top={20} />
      <Check><input type="checkbox" defaultChecked />允许为空</Check>
      <Check><input type="checkbox" defaultChecked />允许直接编辑</Check>
      <Section title="坐标·尺寸" top={10} tall />
      <Field>
        <span>组件位置</span>
        <Pair><Spinner value="184" caption="横坐标" /><Spinner value="10" caption="纵坐标" /></Pair>
      </Field>
      <Field top={6}>
        <span>组件大小</span>
        <Pair><Spinner value="126" caption="宽度" /><Spinner value="21" caption="高度" /></Pair>
      </Field>
    </PanelBody>
  </Panel>
);

const FormulaDialog = () => (
  <Dialog role="dialog" aria-label="函数定义">
    <TitleBar>
      函数定义
      <button type="button" aria-label="关闭">
        <svg width="10" height="10" viewBox="0 0 10 10" stroke="#111" strokeWidth="1.200"><path d="M0 0l10 10M10 0L0 10" /></svg>
      </button>
    </TitleBar>
    <DialogBody>
      <Upper>
        <div>
          <Prompt id="prompt">请在下面的文本编辑框里面输入公式:</Prompt>
          <EditorTabs role="tablist">
            <Segment type="button" role="tab" on aria-selected>常规公式</Segment>
            <Segment type="button" role="tab">脚本公式</Segment>
          </EditorTabs>
          <EditorFrame>
            <Editor role="textbox" aria-labelledby="prompt" contentEditable suppressContentEditableWarning spellCheck={false}>
              <CodeLine>
                {tokens.map(([kind, text], i) => <Token key={i} kind={kind}>{text}</Token>)}
              </CodeLine>
            </Editor>
            <Highlight />
          </EditorFrame>
          <Options>
            <Check><input type="checkbox" />导出/编辑结果时,保留公式</Check>
            <Check><input type="checkbox" defaultChecked />填报/分析时，保留公式用于计算</Check>
            <Spacer />
            <SearchRow>
              <PushButton type="button" w={80}>检查合法性</PushButton>
              <PushButton type="button" w={68}>实时计算</PushButton>
            </SearchRow>
          </Options>
        </div>
        <div>
          <SearchRow>
            <TextInput aria-label="搜索" />
            <PushButton type="button" w={44}>搜索</PushButton>
          </SearchRow>
          <Framed />
        </div>
      </Upper>
      <Lower>
        <Caption>函数类型:</Caption>
        <Caption>函数名:</Caption>
        <Caption>变量:</Caption>
        <Caption>公式说明:</Caption>
        <List role="listbox" aria-label="函数类型">
          {categories.map((c, i) => <ListItem key={c} role="option" aria-selected={i === 0} on={i === 0}>{c}</ListItem>)}
        </List>
        <List role="listbox" aria-label="函数名">
          {functions.map((f, i) => <ListItem key={f} role="option" aria-selected={i === 0} on={i === 0}>{f}</ListItem>)}
        </List>
        <TreeFrame>
          <Tree>
            <Branch><BranchIcon><DataItemIcon /></BranchIcon>数据项</Branch>
            <Branch><BranchIcon open><Caret /><VariableIcon /></BranchIcon>变量 - [16]</Branch>
            <li>
              <Leaves>{variables.map((v) => <Leaf key={v}>{v}</Leaf>)}</Leaves>
            </li>
            <Branch><BranchIcon><DatasetIcon /></BranchIcon>数据集参数</Branch>
            <Branch><BranchIcon><ParamIcon /></BranchIcon>报表参数</Branch>
          </Tree>
          <TreeScroll />
        </TreeFrame>
        <Description lang="zh-CN">{description}</Description>
      </Lower>
      <DialogFooter>
        <PushButton type="button" w={44}>确定</PushButton>
        <PushButton type="button" w={44}>取消</PushButton>
      </DialogFooter>
    </DialogBody>
  </Dialog>
);

export default function App() {
  return (
    <Page>
      <GlobalStyle />
      <Workspace>
        <FormDesigner />
        <Splitter><i /><i /><i /></Splitter>
        <Spreadsheet />
        <BottomBars />
      </Workspace>
      <Tools />
      <Properties />
      <FormulaDialog />
    </Page>
  );
}
